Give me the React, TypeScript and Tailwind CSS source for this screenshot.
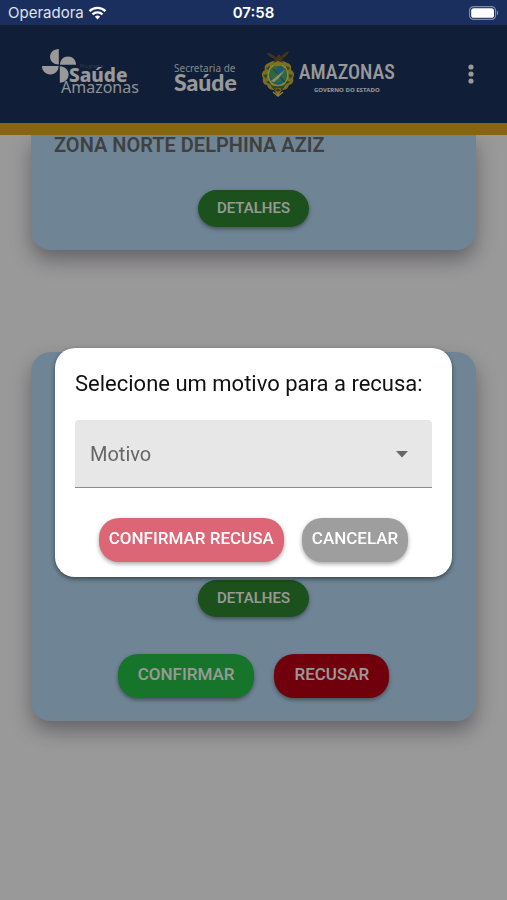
import { useState } from "react"
import type { ReactNode } from "react"

const MOTIVOS = ["Já realizei o exame", "Não posso comparecer", "Outro"]

function StatusBar() {
    return (
        <div className="grid h-[25px] grid-cols-3 items-center bg-[#1b2f5f] px-2 font-['Inter',sans-serif] text-[15px] leading-5 text-white">
            <div className="flex items-center gap-1">
                <span className="text-[#dfe3ec]">Operadora</span>
                <svg width="19" height="14" viewBox="0 0 18 14" fill="none" stroke="white" strokeWidth="2.4" aria-hidden="true">
                    <path d="M1 5.2a11.4 11.4 0 0 1 16 0" />
                    <path d="M4 8.4a7.2 7.2 0 0 1 10 0" />
                    <path d="M6.4 10.7 9 13.4l2.6-2.7a3.7 3.7 0 0 0-5.2 0Z" fill="white" stroke="none" />
                </svg>
            </div>
            <span className="text-center font-semibold">07:58</span>
            <svg className="justify-self-end" width="30" height="14" viewBox="0 0 30 14" aria-hidden="true">
                <rect x="0.6" y="0.6" width="26" height="12.8" rx="4" fill="none" stroke="#7f8aa6" strokeWidth="1.2" />
                <rect x="2.2" y="2.2" width="22.8" height="9.6" rx="2.6" fill="white" />
                <path d="M28 4.8c1.6.6 1.6 3.8 0 4.4Z" fill="#7f8aa6" />
            </svg>
        </div>
    )
}

function SaudeAmazonasLogo() {
    return (
        <svg width="100" height="50" viewBox="0 0 100 50" fill="white" role="img" aria-label="Saúde Amazonas">
            <path d="M16.800 0v15.600C11.500 15.400 8 12.300 8 7.800S11.500.2 16.800 0Z" />
            <path d="M18 15.800c0-4.800 3.400-8.200 8-8.200s8 3.400 8 8.200Z" />
            <path d="M0 17h16.600c0 5-3.400 8.400-8.300 8.400S0 22 0 17Z" />
            <path d="M17.800 17.200v16.600c5.200-.4 8.800-3.600 8.800-8.300s-3.600-8-8.800-8.300Z" />
            <text x="38" y="19" fontSize="5" fillOpacity="0.25" fontFamily="Noto Sans, sans-serif">Programa</text>
            <text x="27" y="33" fontSize="19" fontWeight="800" fontFamily="Noto Sans, sans-serif">Saúde</text>
            <text x="19" y="44" fontSize="16" fontFamily="Noto Sans, sans-serif" fillOpacity="0.95">Amazonas</text>
        </svg>
    )
}

function Crest() {
    return (
        <svg width="34" height="48" viewBox="0 0 34 48" aria-hidden="true">
            {/* wreath */}
            <path d="M8 13c-4 1-5 4-4 7-3 1-4 5-2 8-1 4 1 7 4 7 1 4 4 5 7 5l4 6 4-6c4 0 6-2 7-5 4-1 5-4 4-7 2-3 1-7-2-8 1-4-1-7-4-7-2-3-16-3-18 0Z" fill="#d6b136" />
            <path d="m5 18 4-2-1 5ZM2 25l5-1-2 5ZM5 32l4-2 1 5ZM29 18l-4-2 1 5ZM32 25l-5-1 2 5ZM29 32l-4-2-1 5ZM11 37l5-1-2 5ZM23 37l-5-1 3 5Z" fill="#2b8a45" />
            {/* shield */}
            <ellipse cx="17" cy="25" rx="10.500" ry="11.500" fill="#efdc58" />
            <ellipse cx="17" cy="25" rx="9" ry="10" fill="#2f95c4" />
            <path d="M9 21c3-5 6-6 10-6l-5 7 3 3 7-7c3 4 2 10-1 13-5 2-8 1-11 2 0-4-3-5-3-12Z" fill="#53ad5b" />
            <path d="m10 31 6-5 8-6-6 8-5 4Z" fill="#e4e8c8" />
            <path d="m19 27 5 5M12 19l4 4" stroke="#287a9e" strokeWidth="1.500" />
            <path d="M9 37c3-2 5 1 8 1s5-3 8-1M17 36v9M12 42l5 4 5-4" fill="none" stroke="#efd24b" strokeWidth="1.500" />
            <path d="M9 34c3 3 12 3 16 0l-2 4H11Z" fill="#35884b" />
            <path d="m14 40 3-2 3 2-3 2Z" fill="#b34437" />
            {/* eagle */}
            <path d="M6 3c4 0 7 2 9 5l2-3c1-1 3 0 3 2 2-3 4-5 8-6-1 4-4 6-7 8l1 4-5-1-5 2 2-5C10 8 7 6 6 3Z" fill="#72552d" />
            <path d="m12 13 5-2 5 2-1 3h-8Z" fill="#d8bc42" />
        </svg>
    )
}

function Header() {
    return (
        <header className="relative flex h-[110px] items-center border-b-[12px] border-[#dfa71e] bg-[#1b325d] pr-6 pl-[42px] text-white">
            <SaudeAmazonasLogo />
            <div className="ml-8 pt-1 font-['Noto_Sans',sans-serif]">
                <p className="text-[10px] leading-3 text-[#dddddd]">Secretaria de</p>
                <p className="font-['Lato',sans-serif] text-[23px] leading-4 font-black">Saúde</p>
            </div>
            <div className="ml-6 flex items-center gap-1">
                <Crest />
                <div className="pt-1 text-center">
                    <p className="font-['Roboto_Condensed','Liberation_Sans_Narrow','Liberation_Sans',sans-serif] text-[20px] leading-7 font-medium">AMAZONAS</p>
                    <p className="font-['Open_Sans',sans-serif] text-[6px] leading-2 font-bold">GOVERNO DO ESTADO</p>
                </div>
            </div>
            <button type="button" aria-label="Menu" className="ml-auto flex w-6 justify-center">
                <svg width="6" height="20" viewBox="0 0 6 20" fill="white" aria-hidden="true">
                    <circle cx="3" cy="3" r="2.600" />
                    <circle cx="3" cy="10" r="2.600" />
                    <circle cx="3" cy="17" r="2.600" />
                </svg>
            </button>
        </header>
    )
}

function DetalhesButton() {
    return (
        <button type="button" className="h-[37px] rounded-full bg-[#2f8732] px-[19px] text-[15px] font-medium text-white shadow-[0_2px_4px_rgba(0,0,0,0.4)]">
            DETALHES
        </button>
    )
}

function Card({ className, children }: { className: string; children: ReactNode }) {
    return (
        <section className={`flex flex-col items-center bg-[#b9defa] px-[23px] pb-[23px] shadow-[0_10px_20px_rgba(40,30,50,0.4)] ${className}`}>
            {children}
        </section>
    )
}

function RecusaDialog() {
    const [motivo, setMotivo] = useState("")

    return (
        <div className="fixed inset-x-0 top-[25px] bottom-0 flex items-center bg-black/40 px-[55px]">
            <div role="dialog" aria-modal="true" className="w-full rounded-[20px] bg-white px-5 pt-5 pb-[15px] shadow-[0_2px_5px_rgba(0,0,0,0.5)]">
                <label htmlFor="motivo" className="block text-[22px] leading-8 text-[#111111]">
                    Selecione um motivo para a recusa:
                </label>
                <div className="relative mt-5">
                    <select
                        id="motivo"
                        value={motivo}
                        onChange={(e) => setMotivo(e.target.value)}
                        className="block h-[68px] w-full appearance-none rounded-t-[4px] border-b border-[#8c8c8c] bg-[#e7e7e7] px-[15px] text-[20px] text-[#666666]"
                    >
                        <option value="">Motivo</option>
                        {MOTIVOS.map((m) => (
                            <option key={m} value={m}>{m}</option>
                        ))}
                    </select>
                    <svg className="pointer-events-none absolute top-[31px] right-6" width="12" height="7" viewBox="0 0 12 7" fill="#666666" aria-hidden="true">
                        <path d="M0 0h12L6 6.500Z" />
                    </svg>
                </div>
                <div className="mt-[30px] flex justify-center gap-[18px] text-[17px] font-medium text-white">
                    <button type="button" className="h-11 rounded-[20px] bg-[#dc6675] px-[10px] pb-0.5 shadow-[0_2px_4px_rgba(0,0,0,0.35)]">
                        CONFIRMAR RECUSA
                    </button>
                    <button type="button" className="h-11 rounded-[20px] bg-[#9e9e9e] px-[10px] pb-0.5 shadow-[0_2px_4px_rgba(0,0,0,0.35)]">
                        CANCELAR
                    </button>
                </div>
            </div>
        </div>
    )
}

export default function App() {
    return (
        <div className="min-h-screen bg-white font-['Roboto',sans-serif]">
            <StatusBar />
            <Header />
            <main className="px-[31px] pb-12">
                <Card className="rounded-b-[20px]">
                    <h2 className="w-full text-[20px] leading-5 font-semibold text-[#6b6b6b]">ZONA NORTE DELPHINA AZIZ</h2>
                    <div className="mt-[35px]">
                        <DetalhesButton />
                    </div>
                </Card>
                <Card className="mt-[102px] rounded-[20px] pt-[228px]">
                    <DetalhesButton />
                    <div className="mt-[37px] flex gap-5 text-[17px] font-medium text-white">
                        <button type="button" className="h-11 rounded-[20px] bg-[#26c149] px-5 pb-0.5 shadow-[0_2px_4px_rgba(0,0,0,0.4)]">CONFIRMAR</button>
                        <button type="button" className="h-11 rounded-[20px] bg-[#bb0014] px-5 pb-0.5 shadow-[0_2px_4px_rgba(0,0,0,0.4)]">RECUSAR</button>
                    </div>
                </Card>
            </main>
            <RecusaDialog />
        </div>
    )
}
